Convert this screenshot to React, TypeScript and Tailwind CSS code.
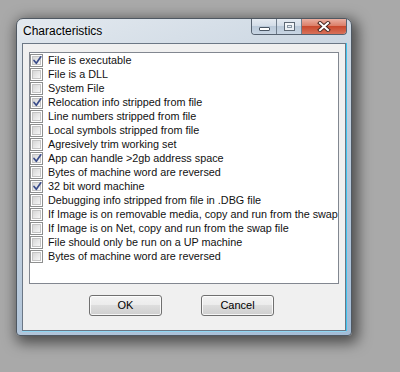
import React from "react";

const items: [string, boolean][] = [
  ["File is executable", true],
  ["File is a DLL", false],
  ["System File", false],
  ["Relocation info stripped from file", true],
  ["Line numbers stripped from file", false],
  ["Local symbols stripped from file", false],
  ["Agresively trim working set", false],
  ["App can handle >2gb address space", true],
  ["Bytes of machine word are reversed", false],
  ["32 bit word machine", true],
  ["Debugging info stripped from file in .DBG file", false],
  ["If Image is on removable media, copy and run from the swap file", false],
  ["If Image is on Net, copy and run from the swap file", false],
  ["File should only be run on a UP machine", false],
  ["Bytes of machine word are reversed", false],
];

function CheckBox({ checked }: { checked: boolean }) {
  return (
    <div className="w-[13px] h-[13px] shrink-0 border border-[#8e8f8f] bg-white p-[1px]">
      <div className="relative w-full h-full border border-[#c4c4c4] bg-[linear-gradient(135deg,#d6d6d6,#f6f6f6)]">
        {checked && (
          <svg className="absolute left-[-1px] top-[-2px]" width="11" height="11" viewBox="0 0 11 11">
            <path d="M2 5.5 L4.3 8.3 L8.8 1.8" fill="none" stroke="#3b4d8a" strokeWidth="1.7" strokeLinecap="round" strokeLinejoin="round" />
          </svg>
        )}
      </div>
    </div>
  );
}

function Button({ label }: { label: string }) {
  return (
    <div className="w-[73px] h-[21px] rounded-[3px] border border-[#707070] shadow-[inset_0_0_0_1px_rgba(255,255,255,0.8)] bg-[linear-gradient(to_bottom,#f3f3f3_0%,#ebebeb_50%,#dddddd_50%,#cfcfcf_100%)] flex items-center justify-center text-[11px] text-black">
      {label}
    </div>
  );
}

export default function App() {
  return (
    <div
      className="w-[400px] h-[372px] bg-[#a9a9a9] pl-[16px] pt-[18px] overflow-hidden"
      style={{ fontFamily: '"Liberation Sans", Arial, sans-serif' }}
    >
      <div className="w-[336px] h-[318px] rounded-t-[7px] rounded-b-[4px] border border-[#4f5862] shadow-[3px_4px_14px_3px_rgba(0,0,0,0.55)] bg-[linear-gradient(160deg,#e3e9ef_0%,#c9d5e1_35%,#b3c6da_70%,#a3bcd6_100%)] flex flex-col">
        <div className="h-[24px] flex items-start justify-between pl-[6px] pr-[4px] shrink-0">
          <div className="h-[24px] flex items-center text-[12px] text-black [text-shadow:0_0_6px_rgba(255,255,255,0.9)]">
            Characteristics
          </div>
          <div className="flex h-[16px] border border-t-0 border-[#566270] rounded-b-[4px] overflow-hidden">
            <div className="w-[25px] h-full border-r border-[#6f7d8c] bg-[linear-gradient(to_bottom,#e4eaf1_0%,#d3dde8_45%,#bac9d9_50%,#c8d5e3_100%)] flex items-end justify-center pb-[3px]">
              <div className="w-[11px] h-[4px] rounded-[1px] border border-[#4a5664] bg-white" />
            </div>
            <div className="w-[25px] h-full border-r border-[#6f7d8c] bg-[linear-gradient(to_bottom,#e4eaf1_0%,#d3dde8_45%,#bac9d9_50%,#c8d5e3_100%)] flex items-center justify-center">
              <div className="w-[11px] h-[9px] border border-[#5d6874] bg-white/70 flex items-center justify-center">
                <div className="w-[5px] h-[3px] border border-[#8996a3]" />
              </div>
            </div>
            <div className="w-[44px] h-full bg-[linear-gradient(to_bottom,#eab0a2_0%,#dc7f69_45%,#c94a2e_50%,#d8715a_100%)] flex items-center justify-center">
              <svg width="14" height="11" viewBox="0 0 14 11">
                <path d="M3 2 L11 9 M11 2 L3 9" stroke="#4a2a24" strokeWidth="4" strokeLinecap="square" />
                <path d="M3 2 L11 9 M11 2 L3 9" stroke="#ffffff" strokeWidth="2" strokeLinecap="square" />
              </svg>
            </div>
          </div>
        </div>
        <div className="flex-1 px-[5px] pb-[4px] min-h-0 flex">
          <div className="w-[324px] shrink-0 border border-[#6b7785] bg-[#f0f0f0] flex flex-col overflow-hidden shadow-[1px_0_0_0_#3fc3ef,0_1px_0_0_#8fd6f2]">
            <div className="ml-[6px] mt-[8px] w-[310px] h-[232px] border border-[#828790] bg-white overflow-hidden pt-[1px] text-[10.8px] text-[#111]">
              {items.map(([label, checked], i) => (
                <div key={i} className="h-[14px] flex items-start whitespace-nowrap">
                  <CheckBox checked={checked} />
                  <span className="ml-[5px] leading-[13px]">{label}</span>
                </div>
              ))}
            </div>
            <div className="flex mt-[11px] pl-[66px] gap-[39px]">
              <Button label="OK" />
              <Button label="Cancel" />
            </div>
          </div>
        </div>
      </div>
    </div>
  );
}
